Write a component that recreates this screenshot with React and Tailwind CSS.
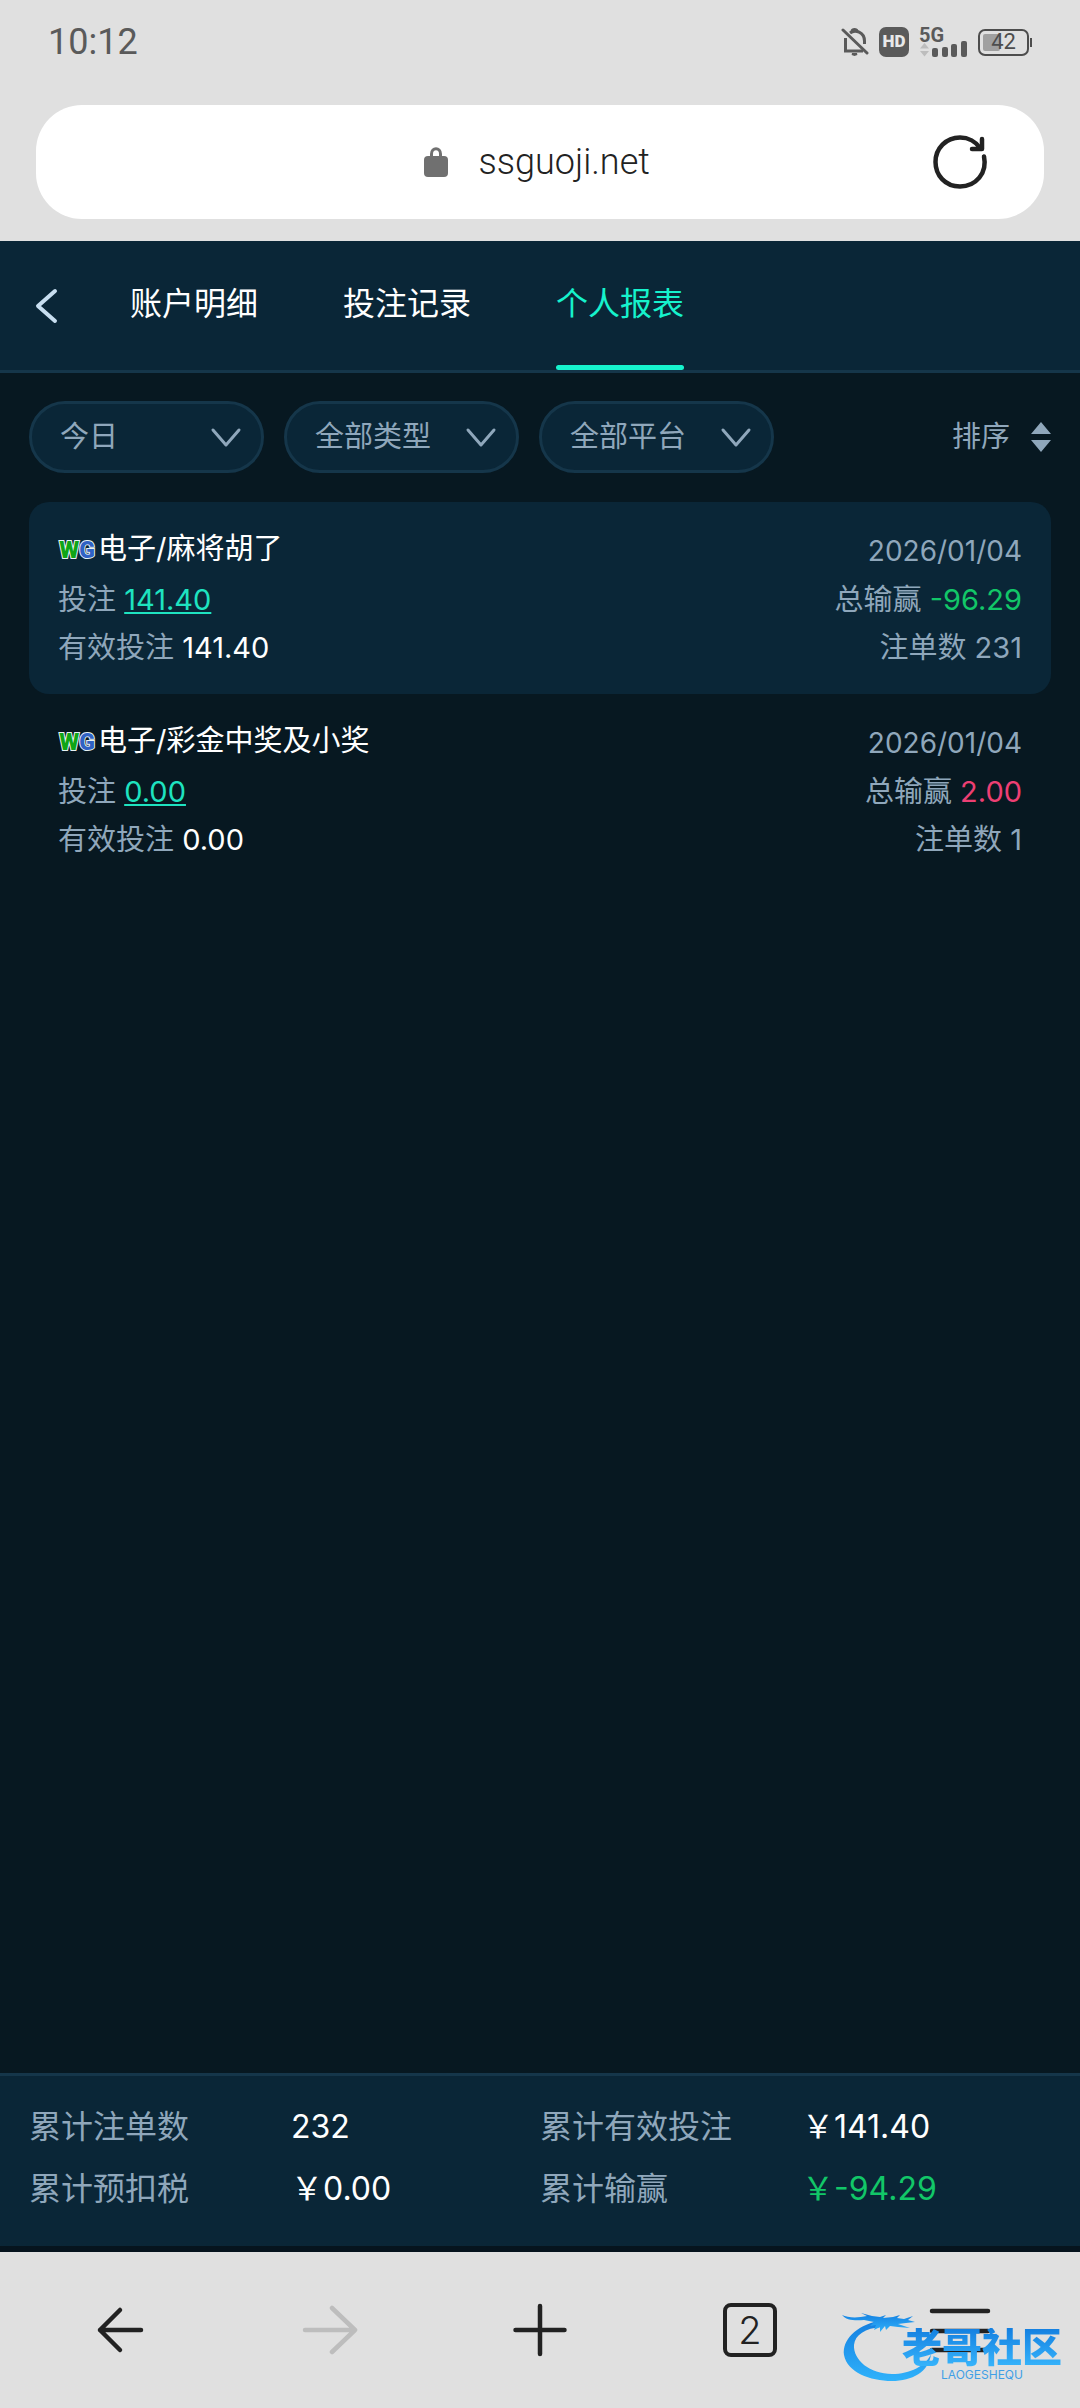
import React from 'react';
import clsx from 'clsx';

const tabs = [
    { name: '账户明细', active: false },
    { name: '投注记录', active: false },
    { name: '个人报表', active: true },
];

const filters = [
    { label: '日期', options: ['今日', '昨日', '近7日'] },
    { label: '类型', options: ['全部类型', '电子'] },
    { label: '平台', options: ['全部平台', 'WG'] },
];

const records = [
    { game: '电子/麻将胡了', date: '2026/01/04', bet: '141.40', valid: '141.40', result: '-96.29', count: 231 },
    { game: '电子/彩金中奖及小奖', date: '2026/01/04', bet: '0.00', valid: '0.00', result: '2.00', count: 1 },
];

const totals = [
    { label: '累计注单数', value: '232', color: 'text-white' },
    { label: '累计有效投注', value: '￥141.40', color: 'text-white' },
    { label: '累计预扣税', value: '￥0.00', color: 'text-white' },
    { label: '累计输赢', value: '￥-94.29', color: 'text-[#12c768]' },
];

const StatusBar = () => (
    <div className="flex h-[84px] items-center justify-between px-12 text-[#5a5a5a]">
        <time className="text-[36px] leading-[44px]">10:12</time>
        <div className="flex items-center gap-[10px]">
            <svg width="28" height="30" viewBox="0 0 28 30" fill="none" stroke="currentColor" strokeWidth="3">
                <path d="M2 3 L26 26" strokeLinecap="round" />
                <path d="M4.500 11 V24 H22" />
                <path d="M9 6 C14 2 23.500 5 23.500 14 V17" />
                <path d="M11 4 C11.500 2 15.500 2 16 4" />
                <path d="M11 27 H16 L13.500 28 Z" strokeWidth="2" />
            </svg>
            <span className="flex h-[30px] w-[30px] items-center justify-center rounded-[7px] bg-[#5a5a5a] text-[17px] font-black text-[#e8e8e8]">
                HD
            </span>
            <div className="relative h-[30px] w-[49px]">
                <span className="absolute left-0 top-0 text-[20px] font-bold leading-[16px]">5G</span>
                <svg className="absolute inset-0" width="49" height="30" viewBox="0 0 49 30" fill="currentColor">
                    <path d="M1 21.500 L5.500 16 L10 21.500 Z M1 24 L5.500 29.500 L10 24 Z" fill="#bdbdbd" />
                    <rect x="13" y="21" width="6" height="9" rx="2" />
                    <rect x="23" y="20" width="6" height="10" rx="2" />
                    <rect x="32" y="17" width="6" height="13" rx="2" />
                    <rect x="42" y="14" width="6" height="16" rx="2" />
                </svg>
            </div>
            <div className="flex items-center gap-px">
                <div className="relative flex h-[27px] w-[51px] items-center justify-center rounded-[7px] border-2 border-[#4d4d4d]">
                    <div className="absolute left-[3px] top-[3px] h-[17px] w-[17px] rounded-[2px] bg-[#a0a0a0]" />
                    <span className="relative text-[22px] leading-[24px] text-[#4d4d4d]">42</span>
                </div>
                <div className="h-[9px] w-[2px] bg-[#4d4d4d]" />
            </div>
        </div>
    </div>
);

const AddressBar = () => (
    <div className="px-9 pb-[22px] pt-[21px]">
        <div className="grid h-[114px] grid-cols-[1fr_auto_1fr] items-center rounded-[46px] bg-white pr-[54px]">
            <div />
            <label className="flex items-center gap-[31px] pl-[52px]">
                <svg width="24" height="30" viewBox="0 0 24 30" aria-label="安全连接">
                    <path d="M7.500 12 V7 C7.500 0 16.500 0 16.500 7 V12" fill="none" stroke="#707070" strokeWidth="3" />
                    <rect y="9" width="24" height="21" rx="4" fill="#707070" />
                </svg>
                <input
                    className="w-[176px] bg-transparent text-[36px] font-light leading-[44px] text-[#222222] outline-none"
                    type="text"
                    aria-label="网址"
                    defaultValue="ssguoji.net"
                />
            </label>
            <button className="justify-self-end" aria-label="刷新">
                <svg width="60" height="60" viewBox="0 0 60 60" fill="none" stroke="#222222" strokeWidth="4.500" strokeLinecap="round" strokeLinejoin="round">
                    <path d="M54 24.500 C57.500 41 46 54.500 30 54.500 C15 54.500 5.500 43 5.500 30 C5.500 16.500 16 5.500 30 5.500 C38 5.500 46 9.500 50.500 16.500" />
                    <path d="M52 7 V17 H42" />
                </svg>
            </button>
        </div>
    </div>
);

const TabBar = () => (
    <header className="flex h-[132px] items-stretch border-b-[3px] border-[#15364a] bg-[#0a2637]">
        <button className="flex w-[130px] items-center pl-[34px]" aria-label="返回">
            <svg width="24" height="36" viewBox="0 0 24 36" fill="none" stroke="#c8def0" strokeWidth="4" strokeLinecap="round" strokeLinejoin="round">
                <path d="M21 3 L4 18 L21 33" />
            </svg>
        </button>
        <nav className="flex gap-[85px]">
            {tabs.map((tab) => (
                <button
                    key={tab.name}
                    className={clsx(
                        'relative pb-1 text-[32px]',
                        tab.active ? 'text-[#16f2cc]' : 'text-white'
                    )}
                >
                    {tab.name}
                    {tab.active && <span className="absolute inset-x-0 bottom-0 h-[5px] rounded-full bg-[#16f2cc]" />}
                </button>
            ))}
        </nav>
    </header>
);

const FilterBar = () => (
    <div className="flex items-center gap-5 px-[29px] pb-[29px] pt-7 text-[29px] text-[#8fa7bb]">
        {filters.map((filter) => (
            <div key={filter.label} className="relative">
                <select
                    className="h-[72px] w-[235px] appearance-none rounded-full border-[3px] border-[#15364a] bg-[#0a2637] pl-7 pr-14 outline-none"
                    aria-label={filter.label}
                >
                    {filter.options.map((option) => (
                        <option key={option}>{option}</option>
                    ))}
                </select>
                <svg
                    className="pointer-events-none absolute right-[22px] top-[26px]"
                    width="32"
                    height="21"
                    viewBox="0 0 32 21"
                    fill="none"
                    stroke="currentColor"
                    strokeWidth="3"
                    strokeLinecap="round"
                    strokeLinejoin="round"
                >
                    <path d="M3 3 L16 18 L29 3" />
                </svg>
            </div>
        ))}
        <button className="ml-auto flex items-center gap-[21px]">
            排序
            <svg width="20" height="30" viewBox="0 0 20 30" fill="currentColor">
                <path d="M10 0 L20 12 H0 Z M0 18 H20 L10 30 Z" />
            </svg>
        </button>
    </div>
);

const WgLogo = () => (
    <span className="flex w-[38px] justify-center pt-1 font-[Roboto,sans-serif] text-[23px] font-black leading-[30px] [paint-order:stroke_fill] [-webkit-text-stroke:2px_#e6f2f5]">
        <span className="text-[#0fa516]">W</span>
        <span className="text-[#2f62c4]">G</span>
    </span>
);

const RecordCard = ({ record }) => {
    const lost = record.result.startsWith('-');
    return (
        <li className="rounded-[20px] px-[29px] pb-[22px] pt-6 text-[29px] leading-[48px] text-[#8fa7bb] odd:bg-[#0a2637]">
            <div className="flex h-[50px] items-center justify-between">
                <h2 className="flex items-center gap-[2px] pb-1 text-white">
                    <WgLogo />
                    {record.game}
                </h2>
                <time className="text-[28px]">{record.date}</time>
            </div>
            <div className="flex justify-between">
                <p>
                    投注{' '}
                    <a href="#detail" className="text-[#1ee3c0] underline decoration-2 underline-offset-2">{record.bet}</a>
                </p>
                <p>
                    总输赢{' '}
                    <span className={lost ? 'text-[#12c768]' : 'text-[#ec3f73]'}>{record.result}</span>
                </p>
            </div>
            <div className="flex justify-between">
                <p>
                    有效投注 <span className="text-white">{record.valid}</span>
                </p>
                <p>注单数 {record.count}</p>
            </div>
        </li>
    );
};

const Totals = () => (
    <dl className="grid grid-cols-2 border-b-[6px] border-t-[3px] border-b-[#06141e] border-t-[#15364a] bg-[#0a2637] px-[29px] pb-[26px] pt-5 text-[32px] leading-[62px]">
        {totals.map((item) => (
            <div key={item.label} className="flex">
                <dt className="w-[262px] text-[#8fa7bb]">{item.label}</dt>
                <dd className={item.color}>{item.value}</dd>
            </div>
        ))}
    </dl>
);

const Watermark = () => (
    <div className="pointer-events-none absolute right-[14px] top-[56px] h-[76px] w-[226px]">
        <svg className="absolute inset-0" width="226" height="76" viewBox="0 0 226 76">
            <defs>
                <linearGradient id="ring" x1="0" y1="0" x2="0" y2="1">
                    <stop offset="0" stopColor="#147fe0" />
                    <stop offset="1" stopColor="#2fb2fb" />
                </linearGradient>
            </defs>
            <g fill="url(#ring)">
                <path d="M38 13 C16 18 2 32 4 47 C7 64 30 73 52 73 C72 73 89 64 91 46 C86 58 70 66 52 66 C30 66 13 52 14 37 C15 27 25 20 42 19 Z" />
                <path d="M2 7 C8 10 18 10 27 8 L21 5 L32 8 L40 9 L46 7 L43 10 L53 9 L60 7 L57 10 L64 11 L73 8 L68 12 L75 14 L66 15 L58 16 L70 20 L58 19 L50 18 L46 22 L45 18 L40 24 L40 19 L34 22 L36 17 L30 18 L34 14 L24 12 C14 13 6 12 2 7 Z" />
            </g>
        </svg>
        <div className="absolute right-1 top-[20px] flex flex-col items-center">
            <span className="bg-gradient-to-b from-[#147fe0] to-[#38b6fc] bg-clip-text text-[40px] font-black leading-[40px] text-transparent">
                老哥社区
            </span>
            <span className="text-[12px] leading-[14px] text-[#3f9fe6]">LAOGESHEQU</span>
        </div>
    </div>
);

const BrowserBar = () => (
    <footer className="relative bg-[#e0e0e0] px-[15px]">
        <div className="grid h-[156px] grid-cols-5 place-items-center text-[#222222]">
            <button aria-label="后退">
                <svg width="50" height="50" viewBox="0 0 50 50" fill="none" stroke="currentColor" strokeWidth="4.500" strokeLinecap="round" strokeLinejoin="round">
                    <path d="M46 25 H5 M25 5 L5 25 L25 45" />
                </svg>
            </button>
            <button className="text-[#bdbdbd]" aria-label="前进" disabled>
                <svg width="56" height="54" viewBox="0 0 56 54" fill="none" stroke="currentColor" strokeWidth="4.500" strokeLinecap="round" strokeLinejoin="round">
                    <path d="M3 27 H53 M30 5 L53 27 L30 49" />
                </svg>
            </button>
            <button aria-label="新建标签页">
                <svg width="54" height="54" viewBox="0 0 54 54" fill="none" stroke="currentColor" strokeWidth="4.500" strokeLinecap="round">
                    <path d="M2.500 27 H51.500 M27 3 V51" />
                </svg>
            </button>
            <button className="flex h-[54px] w-[54px] items-center justify-center rounded-[8px] border-4 border-current text-[38px] font-light leading-none" aria-label="标签页">
                2
            </button>
            <button aria-label="菜单">
                <svg width="62" height="54" viewBox="0 0 62 54" fill="none" stroke="currentColor" strokeWidth="4.500" strokeLinecap="round">
                    <path d="M3 8 H59 M3 28 H59 M3 47 H59" />
                </svg>
            </button>
        </div>
        <Watermark />
    </footer>
);

const App = () => {
    return (
        <div className="flex min-h-screen flex-col bg-[#071821] font-[Inter,'Noto_Sans_CJK_SC',sans-serif]">
            <div className="bg-[#e0e0e0] font-[Roboto,'Noto_Sans_CJK_SC',sans-serif]">
                <StatusBar />
                <AddressBar />
            </div>
            <TabBar />
            <FilterBar />
            <main className="flex-1 px-[29px]">
                <ul>
                    {records.map((record) => (
                        <RecordCard key={record.game} record={record} />
                    ))}
                </ul>
            </main>
            <Totals />
            <BrowserBar />
        </div>
    );
};

export default App;
